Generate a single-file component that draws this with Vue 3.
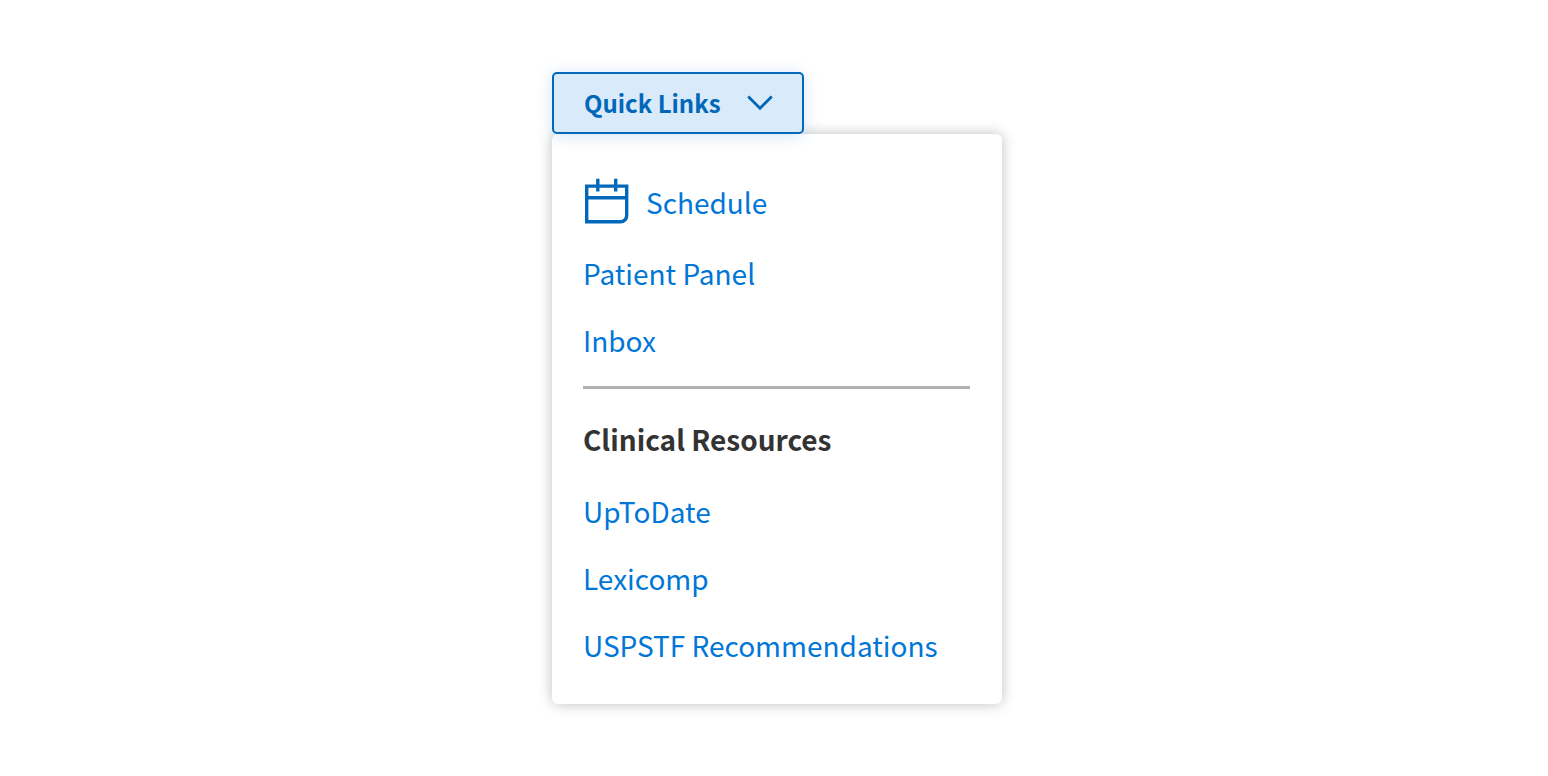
<script setup>
import { ref } from 'vue'

const open = ref(true)
const clinicalLinks = ['UpToDate', 'Lexicomp', 'USPSTF Recommendations']
</script>

<template>
  <main class="page">
    <div class="dropdown">
      <button
        class="trigger"
        type="button"
        :aria-expanded="open"
        aria-controls="quick-links-menu"
        @click="open = !open"
      >
        <span>Quick Links</span>
        <svg class="chevron" viewBox="0 0 26 16" aria-hidden="true">
          <path d="M1.2 1.5 13 13.2 24.8 1.5" />
        </svg>
      </button>

      <nav v-show="open" id="quick-links-menu" class="menu" aria-label="Quick Links">
        <ul class="links">
          <li>
            <a class="with-icon" href="#">
              <svg class="calendar" viewBox="0 0 46 46" aria-hidden="true">
                <path d="M3.7 8.1H43.7V37.6a6.2 6.2 0 0 1-6.2 6.2H3.7ZM3.7 19.8H43.7M14.8 0.8V13.6M32.7 0.8V13.6" />
              </svg>
              <span>Schedule</span>
            </a>
          </li>
          <li><a href="#">Patient Panel</a></li>
          <li><a href="#">Inbox</a></li>
        </ul>
        <hr class="divider" />
        <h2 class="heading">Clinical Resources</h2>
        <ul class="links">
          <li v-for="link in clinicalLinks" :key="link">
            <a href="#">{{ link }}</a>
          </li>
        </ul>
      </nav>
    </div>
  </main>
</template>

<style>
body {
  margin: 0;
  background: #fff;
}
</style>

<style scoped>
.page {
  display: flex;
  justify-content: center;
  padding: 72px 16px 72px 22px;
  font-family: "Noto Sans CJK SC", "Noto Sans", sans-serif;
}

.dropdown {
  display: flex;
  flex-direction: column;
  align-items: flex-start;
  width: 100%;
  max-width: 450px;
}

.trigger {
  position: relative;
  z-index: 1;
  display: flex;
  align-items: center;
  gap: 26px;
  padding: 9px 29px 9px 30px;
  border: 2px solid #0067b9;
  border-radius: 5px;
  background: #d9eafa;
  box-shadow: 0 2px 16px rgba(0, 110, 210, 0.18);
  color: #0067b9;
  font-family: inherit;
  font-size: 24px;
  font-weight: 700;
  line-height: 40px;
  cursor: pointer;
}

.chevron {
  width: 26px;
  height: 16px;
  fill: none;
  stroke: currentColor;
  stroke-width: 2.8;
}

.menu {
  box-sizing: border-box;
  width: 100%;
  padding: 44px 32px 37px 31px;
  border-radius: 6px;
  background: #fff;
  box-shadow: 0 0 14px rgba(0, 0, 0, 0.26);
}

.links {
  display: flex;
  flex-direction: column;
  gap: 24px;
  margin: 0;
  padding: 0;
  list-style: none;
}

.links a {
  display: block;
  color: #0076d6;
  font-size: 28px;
  line-height: 43px;
  text-decoration: none;
}

.links .with-icon {
  display: flex;
  align-items: flex-end;
  gap: 17px;
  padding-bottom: 4px;
}

.calendar {
  width: 46px;
  height: 46px;
  fill: none;
  stroke: #0067b9;
  stroke-width: 3.4;
}

.divider {
  height: 3px;
  margin: 24px 0 29px;
  border: 0;
  background: #b2b2b2;
}

.heading {
  margin: 0 0 29px;
  color: #333;
  font-size: 28px;
  font-weight: 700;
  line-height: 43px;
}
</style>
